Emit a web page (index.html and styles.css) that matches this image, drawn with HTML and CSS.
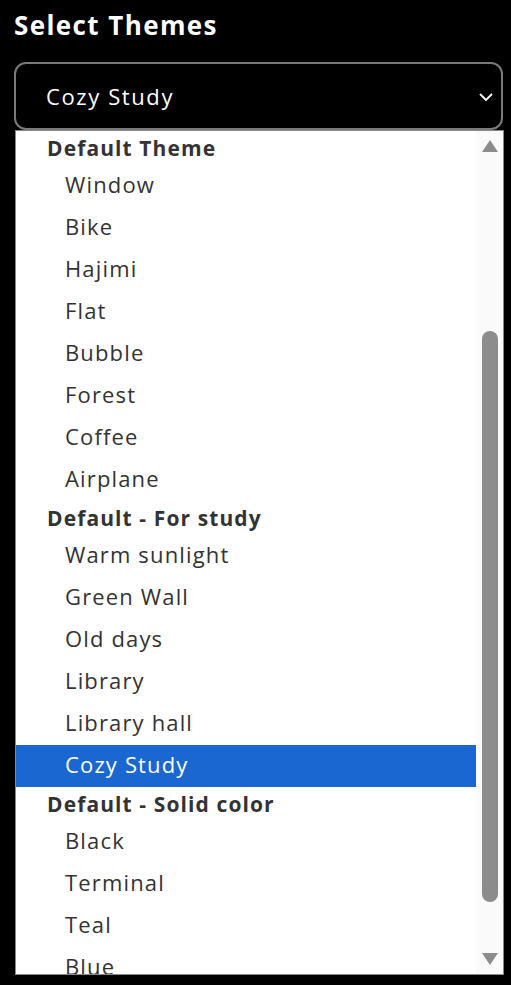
FILE: index.html
```html
<!DOCTYPE html>
<html lang="en">
<head>
    <meta charset="UTF-8">
    <meta name="viewport" content="width=device-width, initial-scale=1.0">
    <title>Select Themes</title>
    <link rel="stylesheet" href="styles.css">
</head>
<body>
    <h2 class="titulo">Select Themes</h2>

    <div class="selector">
        <span>Cozy Study</span>
        <svg class="flecha" width="16" height="10" viewBox="0 0 16 10">
            <path d="M2 2 L8 8 L14 2" fill="none" stroke="#fff" stroke-width="1.8"/>
        </svg>
    </div>

    <div class="lista">
        <div class="opciones">
            <div class="grupo">Default Theme</div>
            <div class="opcion">Window</div>
            <div class="opcion">Bike</div>
            <div class="opcion">Hajimi</div>
            <div class="opcion">Flat</div>
            <div class="opcion">Bubble</div>
            <div class="opcion">Forest</div>
            <div class="opcion">Coffee</div>
            <div class="opcion">Airplane</div>
            <div class="grupo">Default - For study</div>
            <div class="opcion">Warm sunlight</div>
            <div class="opcion">Green Wall</div>
            <div class="opcion">Old days</div>
            <div class="opcion">Library</div>
            <div class="opcion">Library hall</div>
            <div class="opcion activa">Cozy Study</div>
            <div class="grupo">Default - Solid color</div>
            <div class="opcion">Black</div>
            <div class="opcion">Terminal</div>
            <div class="opcion">Teal</div>
            <div class="opcion">Blue</div>
        </div>
        <div class="barra">
            <div class="triangulo arriba"></div>
            <div class="pista">
                <div class="pulgar"></div>
            </div>
            <div class="triangulo abajo"></div>
        </div>
    </div>
</body>
</html>
```

FILE: styles.css
```css
body {
    font-family: "Open Sans", Arial, sans-serif;
    margin: 0;
    padding: 0 8px 0 14px;
    background-color: #000;
    color: #fff;
    height: 985px;
    overflow: hidden;
}
.titulo {
    margin: 0;
    padding-top: 7px;
    font-size: 26px;
    line-height: 36px;
    font-weight: 700;
    letter-spacing: 1.4px;
}
.selector {
    margin-top: 19px;
    height: 64px;
    border: 2px solid #7a7a7a;
    border-radius: 12px;
    display: flex;
    align-items: center;
    justify-content: space-between;
    padding: 0 7px 0 30px;
    font-size: 22px;
    letter-spacing: 1.6px;
}
.flecha {
    margin-top: 2px;
}
.lista {
    margin-left: 1px;
    width: 487px;
    height: 843px;
    background: #fff;
    border: 1px solid #888;
    display: flex;
    overflow: hidden;
    color: #333;
}
.opciones {
    width: 460px;
}
.grupo {
    height: 34px;
    line-height: 34px;
    padding-left: 31px;
    font-size: 21px;
    font-weight: 700;
    letter-spacing: 1.1px;
}
.opcion {
    height: 42px;
    line-height: 39px;
    padding-left: 49px;
    font-size: 22px;
    letter-spacing: 1.15px;
}
.opcion.activa {
    background: #1a67d2;
    color: #fff;
}
.barra {
    flex: 1;
    background: #fafafa;
    display: flex;
    flex-direction: column;
    align-items: center;
    padding: 9px 0;
}
.triangulo {
    width: 0;
    height: 0;
    border-left: 8px solid transparent;
    border-right: 8px solid transparent;
}
.arriba {
    border-bottom: 12px solid #8c8c8c;
}
.abajo {
    border-top: 12px solid #8c8c8c;
}
.pista {
    flex: 1;
    width: 16px;
    padding-top: 179px;
    padding-bottom: 51px;
    display: flex;
}
.pulgar {
    flex: 1;
    background: #8c8c8c;
    border-radius: 8px;
}
```
